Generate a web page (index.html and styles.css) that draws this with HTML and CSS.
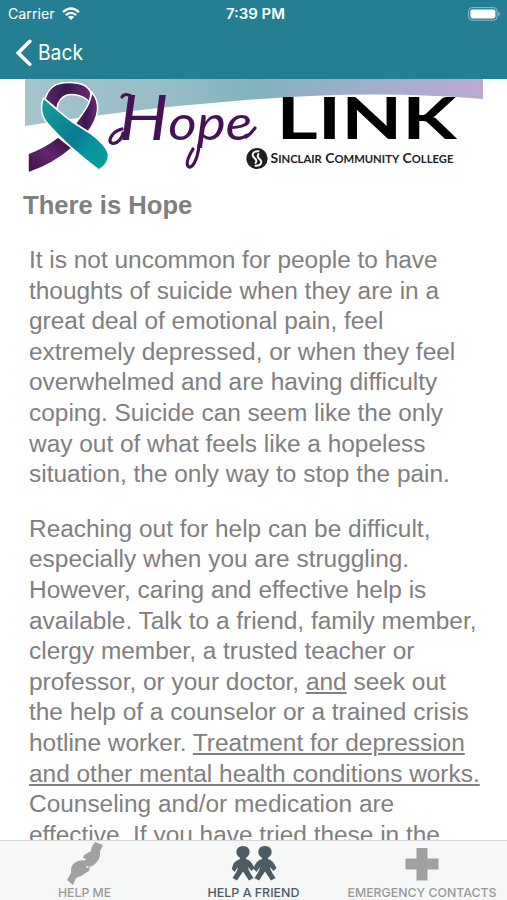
FILE: index.html
```html
<!DOCTYPE html>
<html lang="en">
<head>
<meta charset="utf-8">
<title>Hope Link</title>
<link rel="stylesheet" href="styles.css">
</head>
<body>
<div class="app">
  <header class="header">
    <div class="status">
      <div class="carrier"><svg class="line-text" width="47" height="20"><text x="0" y="15" textLength="46.5" lengthAdjust="spacingAndGlyphs">Carrier</text></svg>
        <svg class="wifi" width="18" height="14" viewBox="0 0 18 14"><g fill="none" stroke="#fff" stroke-width="2.3"><path d="M1 5.2Q9-2.2 17 5.2"/><path d="M3.8 8.2Q9 3.6 14.2 8.2"/></g><path d="M5.9 9.9Q9 7.500 12.1 9.9L9 13Z" fill="#fff"/></svg>
      </div>
      <svg class="line-text time" width="62" height="20"><text x="2" y="15" textLength="59" lengthAdjust="spacingAndGlyphs">7:39 PM</text></svg>
      <svg class="battery" width="33" height="14" viewBox="0 0 33 14"><rect x=".6" y=".6" width="28.5" height="12.6" rx="3.5" fill="none" stroke="#8fbdc7" stroke-width="1"/><rect x="2.4" y="2.4" width="25" height="9" rx="1.8" fill="#fff"/><path d="M30.4 4.7q3 2.2 0 4.5z" fill="#8fbdc7"/></svg>
    </div>
    <div class="nav">
      <svg width="17" height="28" viewBox="0 0 17 28"><path d="M14.8 2.3L3.2 14L14.8 25.2" fill="none" stroke="#fff" stroke-width="3.6" stroke-linecap="round"/></svg>
      <svg class="back" width="50" height="30"><text x="0" y="22.2" textLength="45" lengthAdjust="spacingAndGlyphs">Back</text></svg>
    </div>
  </header>
  <main class="content">
    <svg class="banner" width="458" height="101" viewBox="25 79 458 101">
      <defs>
        <linearGradient id="sky"><stop offset="0" stop-color="#a5c4cb"/><stop offset=".3" stop-color="#98bdc6"/><stop offset=".5" stop-color="#83b3bd"/><stop offset=".7" stop-color="#9cafc8"/><stop offset="1" stop-color="#bca8d0"/></linearGradient>
        <linearGradient id="teal" x1="0" y1="0" x2="1" y2="1"><stop offset="0" stop-color="#16a09b"/><stop offset=".52" stop-color="#087c91"/><stop offset=".7" stop-color="#0894a0"/><stop offset="1" stop-color="#08a194"/></linearGradient>
        <linearGradient id="plum" x1="0" y1="0" x2="1" y2="0"><stop offset="0" stop-color="#5b2768"/><stop offset=".45" stop-color="#3c1650"/><stop offset="1" stop-color="#652a72"/></linearGradient>
        <linearGradient id="tail" x1="0" y1="1" x2="1" y2="0"><stop offset="0" stop-color="#3b1245"/><stop offset=".5" stop-color="#62256e"/><stop offset="1" stop-color="#32103c"/></linearGradient>
      </defs>
      <path d="M25 79H483V99Q370 89 235 101Q130 109 25 126Z" fill="url(#sky)"/>
      <g stroke="#fff" stroke-width="1.500" stroke-linejoin="round">
        <path d="M28 153.500Q44 148 58 137L72 148Q54 164 28 173Z" fill="url(#tail)"/>
        <path d="M45 99C49 87 56 82.500 68 82.500Q87 82 91 93L89.500 102C82 94 72 94 67 95Q58 98 57 109Z" fill="url(#plum)"/>
        <path d="M91.500 92C91 104 83 113 75 124L88 132C99 117 101 103 91.500 92Z" fill="url(#plum)"/>
        <path d="M43.500 98Q38 113 48 124Q68 147 99 170Q109 164 108.500 154Q106 145 90 133L71 121Q58 111 43.500 98Z" fill="url(#teal)"/>
      </g>
      <g class="hope"><text x="119" y="140" textLength="133" lengthAdjust="spacingAndGlyphs"><tspan>H</tspan>ope</text></g>
      <g fill="none" stroke="#451254" stroke-width="3.200" stroke-linecap="round"><path d="M123 133C121 145 106 147 111 137Q114 131 122 129"/><path d="M122 97Q125 92 133 97"/><path d="M246 137Q250 135 255 128"/><path d="M199 145C198 158 193 168 189 167Q184 164 193 149"/></g>
      <g class="link"><text x="276.500" y="139" textLength="180" lengthAdjust="spacingAndGlyphs">LINK</text></g>
      <circle cx="257" cy="158.500" r="10.600" fill="#202020"/>
      <g fill="none" stroke="#fff" stroke-width="1.900" stroke-linecap="round"><path d="M258.500 151.200C252 151 251.500 155.500 254.500 158Q257.500 160.500 255.500 163"/><path d="M255.500 165.800C262 166 262.500 161.500 259.500 159Q256.500 156.500 258.500 154"/></g>
      <text class="college" x="270.500" y="162.500" textLength="183" lengthAdjust="spacingAndGlyphs">S<tspan class="small">INCLAIR</tspan> C<tspan class="small">OMMUNITY</tspan> C<tspan class="small">OLLEGE</tspan></text>
    </svg>
    <h1>There is Hope</h1>
    <p>It is not uncommon for people to have<br>thoughts of suicide when they are in a<br>great deal of emotional pain, feel<br>extremely depressed, or when they feel<br>overwhelmed and are having difficulty<br>coping. Suicide can seem like the only<br>way out of what feels like a hopeless<br>situation, the only way to stop the pain.</p>
    <p>Reaching out for help can be difficult,<br>especially when you are struggling.<br>However, caring and effective help is<br>available. Talk to a friend, family member,<br>clergy member, a trusted teacher or<br>professor, or your doctor, <u>and</u> seek out<br>the help of a counselor or a trained crisis<br>hotline worker. <u>Treatment for depression</u><br><u>and other mental health conditions works.</u><br>Counseling and/or medication are<br>effective. If you have tried these in the</p>
  </main>
  <nav class="tabs">
    <div class="tab"><svg width="42" height="45" viewBox="0 0 42 45"><path fill="#a1a1a1" d="M31 1L39 4L36 10Q37 18 31 23Q27 27 23 25L19 25L22 18L19 17L20 14L27 10Q27 6 31 1ZM3 39L7 32Q6 24 12 21Q17 18 24 20L22 27L26 26L25 30L17 35L12 37L9 44Z"/></svg><svg class="label" width="55" height="15"><text x="1" y="11.500" textLength="53" lengthAdjust="spacingAndGlyphs">HELP ME</text></svg></div>
    <div class="tab active"><svg width="46" height="45" viewBox="0 0 46 45"><g fill="#4d5b62"><path id="person" d="M12 5C20 5 20.500 14 15 16.800V18Q20 19 23.500 27L20.500 30L17 26Q17 29 22.500 37L18 39.500L12 30.500L6 39.500L1.500 37Q7 29 7 26L3.500 31L.8 28Q2 20 9 18V16.800C3.500 14 4 5 12 5Z"/><use href="#person" x="22"/></g></svg><svg class="label" width="94" height="15"><text x=".5" y="11.500" textLength="92" lengthAdjust="spacingAndGlyphs">HELP A FRIEND</text></svg></div>
    <div class="tab"><svg width="34" height="45" viewBox="0 0 34 45"><path d="M11.500 7H22.500V17.500H33.500V28.500H22.500V39.500H11.500V28.500H.5V17.500H11.500Z" fill="#a0a0a0"/></svg><svg class="label" width="150" height="15"><text x=".5" y="11.500" textLength="149" lengthAdjust="spacingAndGlyphs">EMERGENCY CONTACTS</text></svg></div>
  </nav>
</div>
</body>
</html>
```
FILE: styles.css
```css
* { box-sizing: border-box; }
body { margin: 0; background: #fff; font-family: "Liberation Sans", sans-serif; }
svg { display: block; flex: none; }
.app { width: 507px; height: 900px; display: flex; flex-direction: column; overflow: hidden; }
.header { height: 79px; flex: none; background: #257f92; color: #fff; }
.status { height: 27px; display: grid; grid-template-columns: 1fr 62px 1fr; align-items: center; padding: 0 6px 0 8px; }
.carrier { display: flex; gap: 7px; align-items: center; }
.line-text { font: 14px Inter, sans-serif; fill: #fff; }
.time { font-weight: 600; }
.battery { justify-self: end; }
.nav { display: flex; align-items: center; gap: 6px; padding-left: 15px; height: 51px; }
.back { font: 22px Inter, sans-serif; fill: #fff; }
.content { flex: 1; min-height: 0; overflow: hidden; color: #808080; }
.banner { margin-left: 25px; }
.hope { font: italic 49px Lato, sans-serif; fill: #451254; }
.hope tspan { font-size: 62px; }
.link { font: 700 58px Lato, sans-serif; fill: #000; }
.college { font: 700 13px Lato, sans-serif; fill: #222; }
.small { font-size: 10.5px; }
h1 { margin: 10px 0 0 23px; font-size: 25.6px; line-height: 30px; }
p { margin: 25px 0 0 29px; font-size: 24.43px; line-height: 30.6px; white-space: nowrap; }
p + p { margin-top: 24px; }
u { text-decoration-thickness: 1.5px; text-underline-offset: 1.5px; }
.tabs { height: 60px; flex: none; display: grid; grid-template-columns: 169px 169px 169px; background: #f6f7f7; border-top: 1px solid #d6d6d6; }
.tab { display: flex; flex-direction: column; align-items: center; }
.tab:last-child { padding-right: 2px; }
.label { font: 500 12px Inter, sans-serif; fill: #999; margin-top: -1px; }
.active .label { fill: #4d5b62; }
```
